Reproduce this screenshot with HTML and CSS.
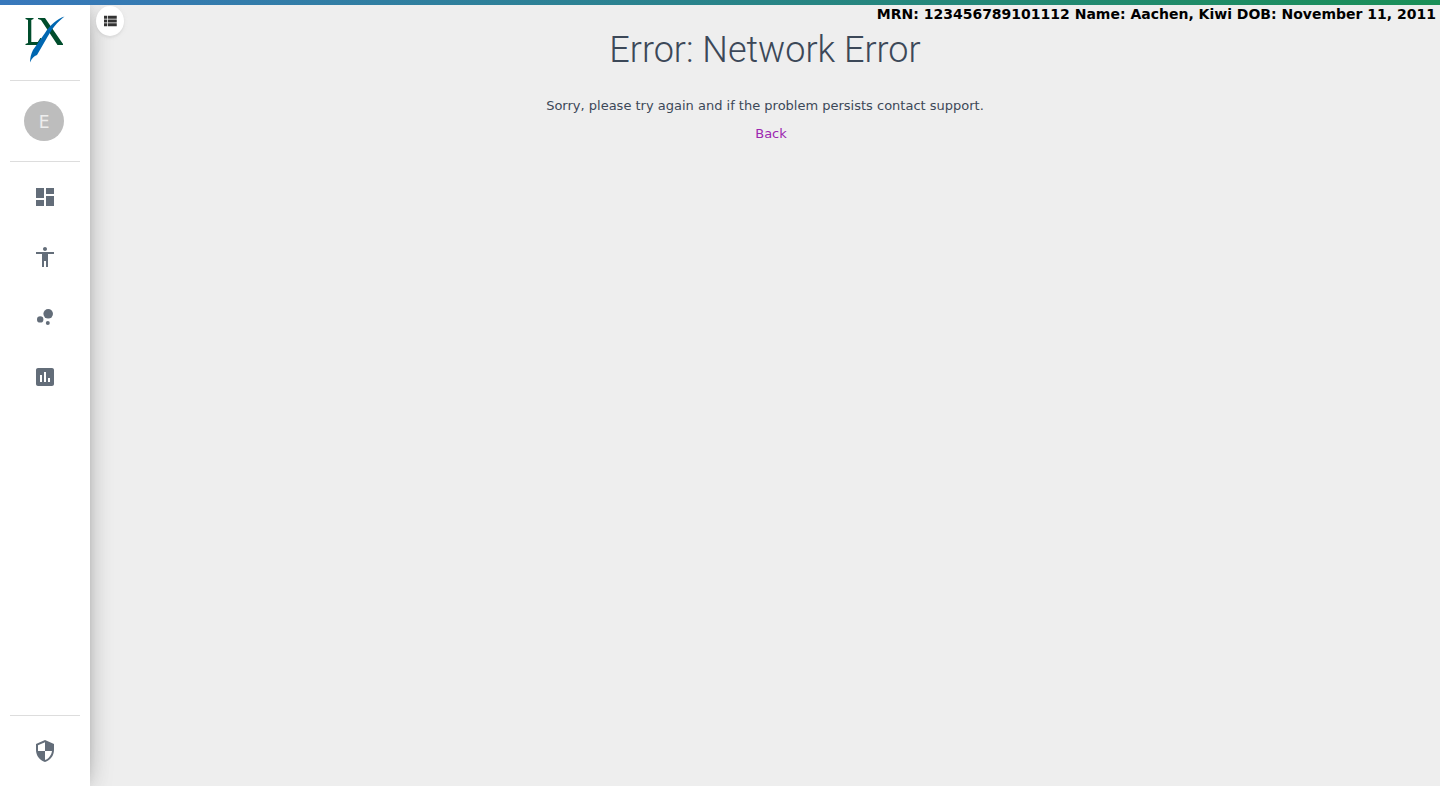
FILE: index.html
```html
<!DOCTYPE html>
<html lang="en">
<head>
<meta charset="utf-8">
<meta name="viewport" content="width=device-width, initial-scale=1">
<title>Error: Network Error</title>
<link rel="stylesheet" href="styles.css">
</head>
<body>
<div class="app">
  <div class="topbar"></div>
  <div class="shell">
    <aside class="sidebar">
      <a class="logo" href="#" aria-label="LX home">
        <svg width="40" height="48" viewBox="0 0 40 48" aria-hidden="true">
          <g fill="#004d2c">
            <path d="M.5 3h8v1L6.300 5v22h6.500l2.500-4h1l-1 7H.5v-1L3 28V5L.5 4z"/>
            <path d="M13 3h7l18 26v1h-5.500L16 5l-3-1z"/>
          </g>
          <path fill="#0067b1" d="M39.500 1.500C32 4 25 10 20 18L8 35C6 39 5 43 5 47.500C7 43 9 41 12 40L23 21C27 14 32 7 39.500 1.500z"/>
        </svg>
      </a>
      <div class="account">
        <button class="avatar" type="button">E</button>
      </div>
      <nav class="nav" aria-label="Main">
        <a class="nav-link" href="#" aria-label="Dashboard"><svg class="icon" viewBox="0 0 24 24"><path d="M3 13h8V3H3v10zm0 8h8v-6H3v6zm10 0h8V11h-8v10zm0-18v6h8V3h-8z"/></svg></a>
        <a class="nav-link" href="#" aria-label="Patients"><svg class="icon" viewBox="0 0 24 24"><path d="M12 2c1.100 0 2 .9 2 2s-.9 2-2 2-2-.9-2-2 .9-2 2-2zm9 7h-6v13h-2v-6h-2v6H9V9H3V7h18v2z"/></svg></a>
        <a class="nav-link" href="#" aria-label="Clusters"><svg class="icon" viewBox="0 0 24 24"><circle cx="7.2" cy="14.4" r="3.2"/><circle cx="14.8" cy="18" r="2"/><circle cx="15.2" cy="8.8" r="4.8"/></svg></a>
        <a class="nav-link" href="#" aria-label="Reports"><svg class="icon" viewBox="0 0 24 24"><path d="M19 3H5c-1.100 0-2 .9-2 2v14c0 1.100.9 2 2 2h14c1.100 0 2-.9 2-2V5c0-1.100-.9-2-2-2zM9 17H7v-7h2v7zm4 0h-2V7h2v10zm4 0h-2v-4h2v4z"/></svg></a>
      </nav>
      <div class="sidebar-foot">
        <a class="nav-link" href="#" aria-label="Security"><svg class="icon" viewBox="0 0 24 24"><path d="M12 1L3 5v6c0 5.550 3.840 10.740 9 12 5.160-1.260 9-6.450 9-12V5l-9-4zm0 10.990h7c-.53 4.120-3.280 7.790-7 8.940V12H5V6.300l7-3.110v8.800z"/></svg></a>
      </div>
    </aside>
    <main class="main">
      <button class="toggle" type="button" aria-label="Toggle sidebar"><svg class="toggle-icon" viewBox="0 0 24 24"><path d="M4 14h4v-4H4v4zm0 5h4v-4H4v4zM4 9h4V5H4v4zm5 5h12v-4H9v4zm0 5h12v-4H9v4zM9 5v4h12V5H9z"/></svg></button>
      <div class="patient">MRN: 123456789101112 Name: Aachen, Kiwi DOB: November 11, 2011</div>
      <section class="error">
        <h1 class="error-title">Error: Network Error</h1>
        <p class="error-text">Sorry, please try again and if the problem persists contact support.</p>
        <a class="back" href="#">Back</a>
      </section>
    </main>
  </div>
</div>
</body>
</html>
```
FILE: styles.css
```css
* { box-sizing: border-box; }

body {
  margin: 0;
  background: #eee;
  color: #3c4858;
  font-family: Verdana, "DejaVu Sans", sans-serif;
  font-size: 13px;
}

.app {
  display: flex;
  flex-direction: column;
  min-height: 100vh;
  overflow: hidden;
}

.topbar {
  position: relative;
  z-index: 2;
  height: 5px;
  background: linear-gradient(to right, #3878bc, #1a8f57);
}

.shell { display: flex; flex: 1; }

.sidebar {
  position: relative;
  z-index: 1;
  display: flex;
  flex-direction: column;
  flex: none;
  width: 90px;
  background: #fff;
  box-shadow: 0 0 30px -12px rgba(0, 0, 0, .42), 0 4px 25px 0 rgba(0, 0, 0, .12), 0 0 10px -5px rgba(0, 0, 0, .2);
}

.logo {
  display: flex;
  justify-content: center;
  margin: 0 10px;
  padding: 10px 0 17px;
  border-bottom: 1px solid #ddd;
}

.account {
  display: flex;
  margin: 0 10px;
  padding: 20px 14px;
  border-bottom: 1px solid #ddd;
}

.avatar {
  width: 40px;
  height: 40px;
  padding: 2px 0 0;
  border: 0;
  border-radius: 50%;
  background: #bdbdbd;
  color: #eee;
  font: 400 17px/20px Verdana, "DejaVu Sans", sans-serif;
}

.nav {
  display: flex;
  flex-direction: column;
  gap: 10px;
  margin: 10px 10px 0;
}

.nav-link {
  display: flex;
  align-items: center;
  justify-content: center;
  height: 50px;
}

.icon {
  width: 24px;
  height: 24px;
  fill: #636d79;
}

.sidebar-foot {
  margin: auto 10px 0;
  padding: 10px 0;
  border-top: 1px solid #ddd;
}

.main {
  position: relative;
  flex: 1;
  min-width: 0;
}

.toggle {
  position: absolute;
  z-index: 2;
  top: 1px;
  left: 6px;
  display: flex;
  align-items: center;
  justify-content: center;
  width: 28px;
  height: 30px;
  padding: 0;
  border: 0;
  border-radius: 50%;
  background: #fff;
  box-shadow: 0 2px 2px rgba(153, 153, 153, .14), 0 1px 5px rgba(153, 153, 153, .12);
}

.toggle-icon {
  width: 18px;
  height: 18px;
  fill: #333;
}

.patient {
  padding-right: 4px;
  color: #000;
  font-size: 14px;
  font-weight: 700;
  line-height: 18px;
  text-align: right;
}

.error {
  display: flex;
  flex-direction: column;
  align-items: center;
}

.error-title {
  margin: 5px 0 24px;
  font: 300 36px/44px Roboto, sans-serif;
}

.error-text {
  margin: 0 0 8px;
  line-height: 20px;
}

.back {
  margin-left: 12px;
  color: #9c27b0;
  line-height: 20px;
  text-decoration: none;
}
```
